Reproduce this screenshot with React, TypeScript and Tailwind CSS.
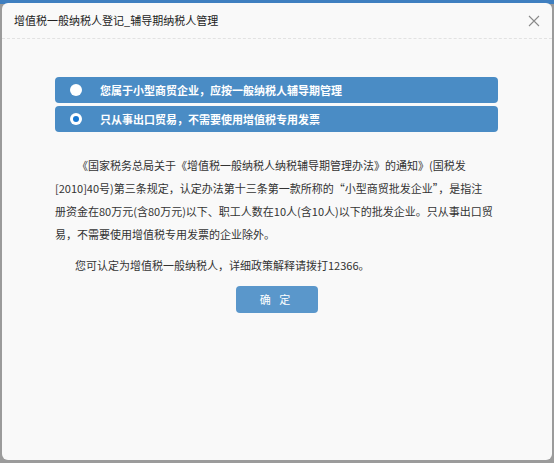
import { useState } from 'react';

const options = [
  '您属于小型商贸企业，应按一般纳税人辅导期管理',
  '只从事出口贸易，不需要使用增值税专用发票',
];

const font = { fontFamily: '"Noto Sans CJK SC", "Noto Sans", sans-serif' };

const App = () => {
  const [selected, setSelected] = useState(1);

  return (
    <div
      className="w-[554px] h-[463px] pt-[3px] px-[2px] pb-[3px] bg-[linear-gradient(to_bottom,#3f7fc0_0px,#3f7fc0_4px,#9b9b9b_4px,#9b9b9b_100%)]"
      style={font}
    >
      <div className="w-full h-full rounded-[6px] bg-[#f9f9f9] flex flex-col">
        <div className="h-[36px] flex items-center justify-between pl-[12px] pr-[10px] border-b border-dashed border-[#e2e2e2]">
          <span className="text-[11px] text-[#222]">增值税一般纳税人登记_辅导期纳税人管理</span>
          <svg width="12" height="12" viewBox="0 0 12 12" className="mr-[2px]">
            <path d="M1 1L11 11M11 1L1 11" stroke="#8a8a8a" strokeWidth="1.1" fill="none" />
          </svg>
        </div>

        <div className="pt-[38px] pl-[53px] pr-[54px]">
          <div className="flex flex-col gap-[3px]">
            {options.map((text, i) => (
              <button
                key={i}
                onClick={() => setSelected(i)}
                className="h-[26px] w-full flex items-center rounded-[4px] bg-[#4a8cc5] text-left"
              >
                <span className="ml-[15px] w-[12px] h-[12px] rounded-full bg-white flex items-center justify-center">
                  {selected === i && <span className="w-[6px] h-[6px] rounded-full bg-[#1677d2]" />}
                </span>
                <span className="ml-[18px] text-[11px] font-bold text-white">{text}</span>
              </button>
            ))}
          </div>

          <div className="mt-[22px] text-[11px] leading-[23px] text-[#333] whitespace-nowrap">
            <p className="pl-[22px]">《国家税务总局关于《增值税一般纳税人纳税辅导期管理办法》的通知》(国税发</p>
            <p>[2010]40号)第三条规定，认定办法第十三条第一款所称的“小型商贸批发企业”，是指注</p>
            <p>册资金在80万元(含80万元)以下、职工人数在10人(含10人)以下的批发企业。只从事出口贸</p>
            <p>易，不需要使用增值税专用发票的企业除外。</p>
          </div>

          <p className="mt-[8px] text-[11px] leading-[23px] text-[#333] pl-[20px] whitespace-nowrap">
            您可认定为增值税一般纳税人，详细政策解释请拨打12366。
          </p>

          <div className="mt-[9px] flex justify-center">
            <button className="w-[82px] h-[27px] rounded-[4px] bg-[#5a97cb] text-white text-[11px] tracking-[3px]">
              确 定
            </button>
          </div>
        </div>
      </div>
    </div>
  );
};

export default App;
